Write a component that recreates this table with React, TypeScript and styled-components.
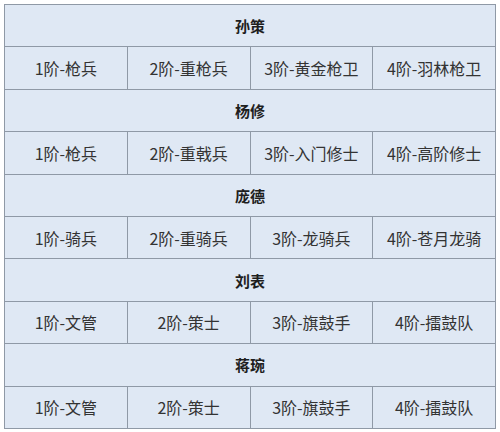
import styled, { createGlobalStyle } from 'styled-components';

const GlobalStyle = createGlobalStyle`
  html, body {
    margin: 0;
    padding: 0;
    background: #ffffff;
  }
  body {
    font-family: "Noto Sans CJK SC", "Noto Sans", sans-serif;
  }
`;

const sections = [
  { name: "孙策", units: ["1阶-枪兵", "2阶-重枪兵", "3阶-黄金枪卫", "4阶-羽林枪卫"] },
  { name: "杨修", units: ["1阶-枪兵", "2阶-重戟兵", "3阶-入门修士", "4阶-高阶修士"] },
  { name: "庞德", units: ["1阶-骑兵", "2阶-重骑兵", "3阶-龙骑兵", "4阶-苍月龙骑"] },
  { name: "刘表", units: ["1阶-文管", "2阶-策士", "3阶-旗鼓手", "4阶-擂鼓队"] },
  { name: "蒋琬", units: ["1阶-文管", "2阶-策士", "3阶-旗鼓手", "4阶-擂鼓队"] },
];

const App = () => {
  return (
    <>
      <GlobalStyle />
      <Page>
        <Table>
          {sections.map((s) => (
            <Section key={s.name}>
              <Cell $header>{s.name}</Cell>
              {s.units.map((u) => (
                <Cell key={u}>{u}</Cell>
              ))}
            </Section>
          ))}
        </Table>
      </Page>
    </>
  );
};

export default App;

const Page = styled.div`
  width: 500px;
  height: 432px;
  padding: 4px;
  box-sizing: border-box;
  background: #ffffff;
`;

const Table = styled.div`
  width: 492px;
  height: 425px;
  box-sizing: border-box;
  padding: 1px;
  display: grid;
  grid-template-columns: repeat(4, 1fr);
  grid-template-rows: repeat(10, 1fr);
  gap: 1px;
  background: #8f99a6;
`;

const Section = styled.div`
  display: contents;
`;

const Cell = styled.div<{ $header?: boolean }>`
  grid-column: ${({ $header }) => ($header ? "1 / span 4" : "auto")};
  display: flex;
  align-items: center;
  justify-content: center;
  background: #dfe8f4;
  color: ${({ $header }) => ($header ? "#1e1e1e" : "#333333")};
  font-size: ${({ $header }) => ($header ? "15px" : "16px")};
  font-weight: ${({ $header }) => ($header ? 700 : 400)};
  white-space: nowrap;
`;
